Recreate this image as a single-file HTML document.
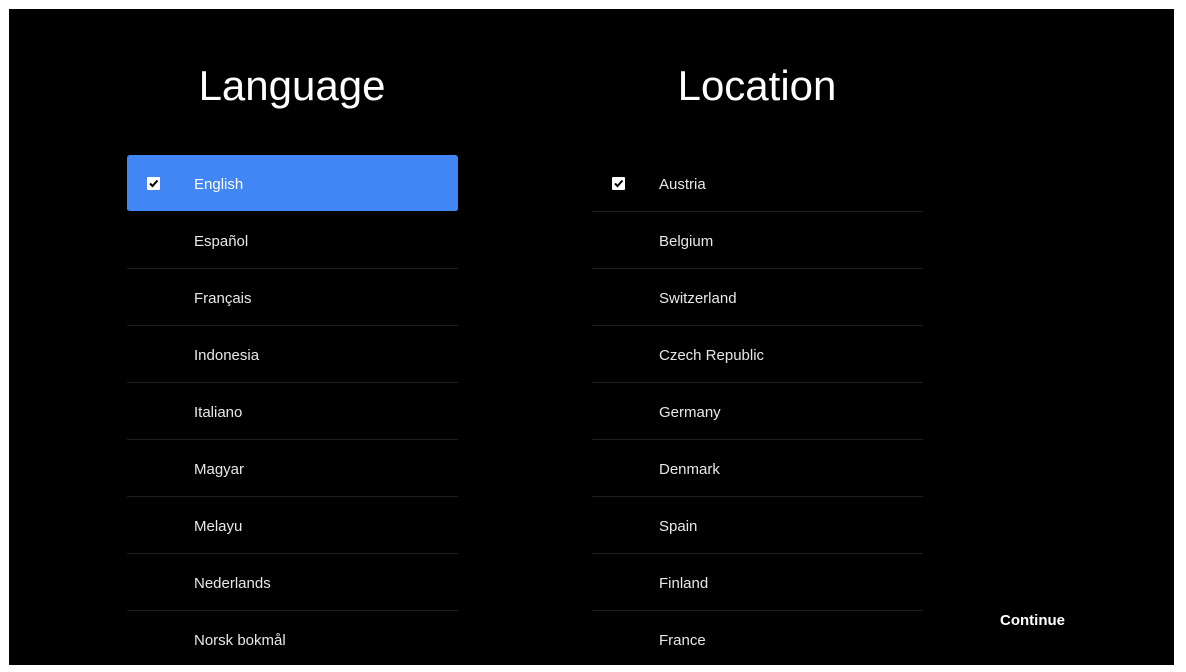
<!DOCTYPE html>
<html><head><style>
body{margin:0;width:1186px;height:672px;background:#fff;overflow:hidden;font-family:"Liberation Sans",sans-serif;}
.scr{position:absolute;left:9px;top:9px;width:1165px;height:656px;background:#000;overflow:hidden;}
h1{position:absolute;margin:0;font-weight:normal;color:#fff;font-size:42px;top:53px;width:330px;text-align:center;}
.list{position:absolute;top:146px;width:331px;}
.row{height:56px;border-bottom:1px solid #1e1e1e;position:relative;color:#e8e8e8;font-size:15px;}
.row span{position:absolute;left:67px;top:21px;}
.sel{background:#4285f4;border-radius:3px;border-bottom:1px solid #000;color:#fff;}
.cb{position:absolute;left:20px;top:22px;width:13px;height:13px;background:#fff;border-radius:1px;}
.cb svg{position:absolute;left:0;top:0}
.cont{position:absolute;left:991px;top:603px;color:#fff;font-size:15px;font-weight:bold;}
</style></head><body>
<div class="scr">
<h1 style="left:118px">Language</h1>
<h1 style="left:583px">Location</h1>
<div class="list" style="left:118px">
<div class="row sel"><div class="cb"><svg width="13" height="13"><path d="M3 6.5l2.5 2.5L10.5 3.5" stroke="#000" stroke-width="2" fill="none"/></svg></div><span>English</span></div>
<div class="row"><span>Español</span></div>
<div class="row"><span>Français</span></div>
<div class="row"><span>Indonesia</span></div>
<div class="row"><span>Italiano</span></div>
<div class="row"><span>Magyar</span></div>
<div class="row"><span>Melayu</span></div>
<div class="row"><span>Nederlands</span></div>
<div class="row"><span>Norsk bokmål</span></div>
</div>
<div class="list" style="left:583px">
<div class="row"><div class="cb"><svg width="13" height="13"><path d="M3 6.5l2.5 2.5L10.5 3.5" stroke="#000" stroke-width="2" fill="none"/></svg></div><span>Austria</span></div>
<div class="row"><span>Belgium</span></div>
<div class="row"><span>Switzerland</span></div>
<div class="row"><span>Czech Republic</span></div>
<div class="row"><span>Germany</span></div>
<div class="row"><span>Denmark</span></div>
<div class="row"><span>Spain</span></div>
<div class="row"><span>Finland</span></div>
<div class="row"><span>France</span></div>
</div>
<div class="cont">Continue</div>
</div>
</body></html>
